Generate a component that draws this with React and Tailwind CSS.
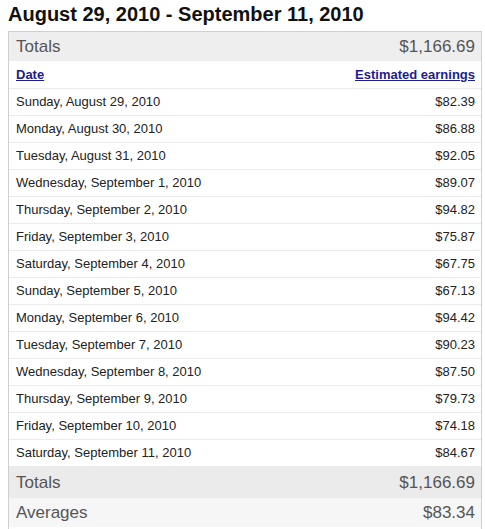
import React from "react";

const rows = [
  ["Sunday, August 29, 2010", "$82.39"],
  ["Monday, August 30, 2010", "$86.88"],
  ["Tuesday, August 31, 2010", "$92.05"],
  ["Wednesday, September 1, 2010", "$89.07"],
  ["Thursday, September 2, 2010", "$94.82"],
  ["Friday, September 3, 2010", "$75.87"],
  ["Saturday, September 4, 2010", "$67.75"],
  ["Sunday, September 5, 2010", "$67.13"],
  ["Monday, September 6, 2010", "$94.42"],
  ["Tuesday, September 7, 2010", "$90.23"],
  ["Wednesday, September 8, 2010", "$87.50"],
  ["Thursday, September 9, 2010", "$79.73"],
  ["Friday, September 10, 2010", "$74.18"],
  ["Saturday, September 11, 2010", "$84.67"],
];

export default function App() {
  return (
    <div className="bg-white w-[485px] h-[529px] overflow-hidden font-['Liberation_Sans',Arial,sans-serif]">
      <div className="pl-[8px] pt-[3px] h-[31px] text-[20px] leading-[23px] font-bold text-[#111]">
        August 29, 2010 - September 11, 2010
      </div>
      <div className="ml-[8px] w-[474px] border-l border-r border-t border-[#cfcfcf]">
        <div className="h-[29px] bg-[#eeeeee] flex items-center justify-between pl-[7px] pr-[6px] text-[17px] text-[#555]">
          <span>Totals</span>
          <span>$1,166.69</span>
        </div>
        <div className="h-[28px] pt-[1px] border-b border-[#ebebeb] flex items-center justify-between pl-[7px] pr-[6px] text-[13px] font-bold text-[#1c1c8e]">
          <a href="#" className="underline">Date</a>
          <a href="#" className="underline">Estimated earnings</a>
        </div>
        {rows.map(([d, v]) => (
          <div
            key={d}
            className="h-[27px] border-b border-[#ebebeb] flex items-center justify-between pl-[7px] pr-[6px] text-[13px] text-[#222]"
          >
            <span>{d}</span>
            <span>{v}</span>
          </div>
        ))}
        <div className="h-[31px] bg-[#ebebeb] flex items-center justify-between pl-[7px] pr-[6px] text-[17px] text-[#555]">
          <span>Totals</span>
          <span>$1,166.69</span>
        </div>
        <div className="h-[29px] bg-[#f6f6f6] flex items-center justify-between pl-[7px] pr-[6px] text-[17px] text-[#555]">
          <span>Averages</span>
          <span>$83.34</span>
        </div>
        <div className="h-[10px]"></div>
      </div>
    </div>
  );
}
